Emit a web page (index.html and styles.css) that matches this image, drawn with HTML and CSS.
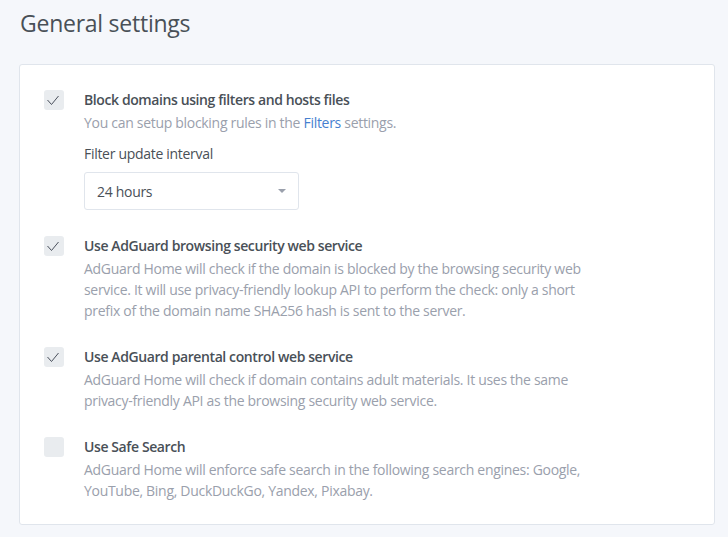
FILE: index.html
```html
<!DOCTYPE html>
<html lang="en">
<head>
<meta charset="utf-8">
<title>General settings</title>
<link rel="stylesheet" href="styles.css">
</head>
<body>
<main class="page">
  <h1 class="page-title">General settings</h1>
  <section class="card">
    <div class="setting">
      <span class="checkbox checked">
        <svg viewBox="0 0 20 20" width="20" height="20"><path d="M3.5 10 L7.5 14.5 L14.5 6" fill="none" stroke="#4a505c" stroke-width="1"/></svg>
      </span>
      <div class="setting-body">
        <div class="setting-title">Block domains using filters and hosts files</div>
        <div class="setting-desc">You can setup blocking rules in the <a href="#" class="link">Filters</a> settings.</div>
        <div class="field">
          <label class="field-label">Filter update interval</label>
          <div class="select">
            <span>24 hours</span>
            <span class="caret"></span>
          </div>
        </div>
      </div>
    </div>

    <div class="setting">
      <span class="checkbox checked">
        <svg viewBox="0 0 20 20" width="20" height="20"><path d="M3.5 10 L7.5 14.5 L14.5 6" fill="none" stroke="#4a505c" stroke-width="1"/></svg>
      </span>
      <div class="setting-body">
        <div class="setting-title">Use AdGuard browsing security web service</div>
        <div class="setting-desc">AdGuard Home will check if the domain is blocked by the browsing security web service. It will use privacy-friendly lookup API to perform the check: only a short prefix of the domain name SHA256 hash is sent to the server.</div>
      </div>
    </div>

    <div class="setting">
      <span class="checkbox checked">
        <svg viewBox="0 0 20 20" width="20" height="20"><path d="M3.5 10 L7.5 14.5 L14.5 6" fill="none" stroke="#4a505c" stroke-width="1"/></svg>
      </span>
      <div class="setting-body">
        <div class="setting-title">Use AdGuard parental control web service</div>
        <div class="setting-desc">AdGuard Home will check if domain contains adult materials. It uses the same privacy-friendly API as the browsing security web service.</div>
      </div>
    </div>

    <div class="setting">
      <span class="checkbox"></span>
      <div class="setting-body">
        <div class="setting-title">Use Safe Search</div>
        <div class="setting-desc">AdGuard Home will enforce safe search in the following search engines: Google, YouTube, Bing, DuckDuckGo, Yandex, Pixabay.</div>
      </div>
    </div>
  </section>
</main>
</body>
</html>
```

FILE: styles.css
```css
* { box-sizing: border-box; }

html, body {
  margin: 0;
  background: #f5f7fb;
}

body {
  font-family: "Open Sans", "Noto Sans", sans-serif;
  font-size: 14px;
  color: #495057;
}

.page {
  padding: 6px 13px 0 19px;
}

.page-title {
  margin: 0 0 24px 1px;
  font-size: 23px;
  font-weight: 400;
  letter-spacing: -0.25px;
  line-height: 34px;
  color: #495057;
}

.card {
  background: #fff;
  border: 1px solid #e0e5ec;
  border-radius: 3px;
  padding: 25px 24px 23px 24px;
}

.setting {
  display: flex;
  gap: 20px;
  margin-bottom: 26px;
}

.setting:last-child { margin-bottom: 0; }

.checkbox {
  flex: none;
  width: 20px;
  height: 20px;
  border-radius: 3px;
  background: #e9ecef;
  display: block;
}

.checkbox svg { display: block; }

.setting-body {
  width: 520px;
  letter-spacing: -0.3px;
}

.setting-title {
  font-weight: 600;
  letter-spacing: -0.4px;
  line-height: 20px;
  color: #495057;
}

.setting-desc {
  margin-top: 2px;
  line-height: 21px;
  color: #9aa0ac;
}

.link {
  color: #467fcf;
  text-decoration: none;
}

.field { margin-top: 10px; }

.field-label {
  display: block;
  line-height: 21px;
  margin-bottom: 8px;
}

.select {
  width: 215px;
  height: 38px;
  border: 1px solid #e0e5ec;
  border-radius: 3px;
  display: flex;
  align-items: center;
  justify-content: space-between;
  padding: 0 12px 0 12px;
  color: #495057;
}

.caret {
  width: 0;
  height: 0;
  border-left: 4px solid transparent;
  border-right: 4px solid transparent;
  border-top: 4px solid #9aa0ac;
}
```
